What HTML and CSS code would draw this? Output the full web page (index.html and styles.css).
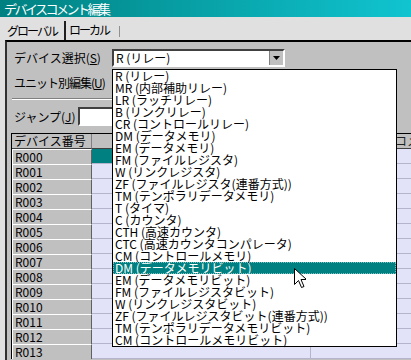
FILE: index.html
```html
<!doctype html>
<html>
<head>
  <meta charset="utf-8">
  <title>デバイスコメント編集</title>
  <link rel="stylesheet" href="styles.css">
</head>
<body>
  <div class="titlebar">デバイスコメント編集</div>
  <div class="tabs">
    <span class="tab active">グローバル</span>
    <span class="tab">ローカル</span>
    <span class="tab-sep"></span>
  </div>
  <div class="panel">
    <div class="field">
      <span class="label">デバイス選択(<u>S</u>)</span>
      <div class="combo">
        <span class="combo-text">R (リレー)</span>
        <span class="combo-btn">
          <svg width="7" height="4" viewBox="0 0 7 4"><path d="M0 0h7L3.5 4z" fill="#000"/></svg>
        </span>
      </div>
    </div>
    <div class="field">
      <span class="label tight">ユニット別編集(<u>U</u>)</span>
    </div>
    <div class="sep"></div>
    <div class="field jump">
      <span class="label">ジャンプ(<u>J</u>)</span>
      <div class="input"></div>
    </div>
    <div class="grid">
      <div class="head first">デバイス番号</div>
      <div class="head"></div>
      <div class="head comment">コメント</div>

      <div class="rowhead">R000</div><div class="cell selected"></div><div class="cell"></div>
      <div class="rowhead">R001</div><div class="cell"></div><div class="cell"></div>
      <div class="rowhead">R002</div><div class="cell"></div><div class="cell"></div>
      <div class="rowhead">R003</div><div class="cell"></div><div class="cell"></div>
      <div class="rowhead">R004</div><div class="cell"></div><div class="cell"></div>
      <div class="rowhead">R005</div><div class="cell"></div><div class="cell"></div>
      <div class="rowhead">R006</div><div class="cell"></div><div class="cell"></div>
      <div class="rowhead">R007</div><div class="cell"></div><div class="cell"></div>
      <div class="rowhead">R008</div><div class="cell"></div><div class="cell"></div>
      <div class="rowhead">R009</div><div class="cell"></div><div class="cell"></div>
      <div class="rowhead">R010</div><div class="cell"></div><div class="cell"></div>
      <div class="rowhead">R011</div><div class="cell"></div><div class="cell"></div>
      <div class="rowhead">R012</div><div class="cell"></div><div class="cell"></div>
      <div class="rowhead">R013</div><div class="cell"></div><div class="cell"></div>
    </div>
  </div>

  <ul class="dropdown">
    <li>R (リレー)</li>
    <li>MR (内部補助リレー)</li>
    <li>LR (ラッチリレー)</li>
    <li>B (リンクリレー)</li>
    <li>CR (コントロールリレー)</li>
    <li>DM (データメモリ)</li>
    <li>EM (データメモリ)</li>
    <li>FM (ファイルレジスタ)</li>
    <li>W (リンクレジスタ)</li>
    <li>ZF (ファイルレジスタ(連番方式))</li>
    <li>TM (テンポラリデータメモリ)</li>
    <li>T (タイマ)</li>
    <li>C (カウンタ)</li>
    <li>CTH (高速カウンタ)</li>
    <li>CTC (高速カウンタコンパレータ)</li>
    <li>CM (コントロールメモリ)</li>
    <li class="hot">DM (データメモリビット)</li>
    <li>EM (データメモリビット)</li>
    <li>FM (ファイルレジスタビット)</li>
    <li>W (リンクレジスタビット)</li>
    <li>ZF (ファイルレジスタビット(連番方式))</li>
    <li>TM (テンポラリデータメモリビット)</li>
    <li>CM (コントロールメモリビット)</li>
  </ul>

  <svg class="cursor" width="12" height="21" viewBox="0 0 12 21">
    <path d="M0.5 0.5v16l4-4 3 7 2.5-1-3-7h5.5z" fill="#fff" stroke="#000" stroke-width="1"/>
  </svg>
</body>
</html>
```

FILE: styles.css
```css
body {
  margin: 0;
  width: 411px;
  height: 360px;
  overflow: hidden;
  position: relative;
  background: #e0e0e0;
  font-family: "Noto Sans CJK JP", "Noto Sans", sans-serif;
  font-size: 12px;
  line-height: 1;
  color: #000;
}

.titlebar {
  height: 17px;
  padding-left: 4px;
  background: linear-gradient(to right, #008080, #10c4d0);
  color: #fff;
  font-size: 13px;
  line-height: 17px;
  letter-spacing: -2.5px;
}

.tabs {
  height: 23px;
  display: flex;
  align-items: stretch;
  padding-left: 7px;
  background: #e0e0e0;
  letter-spacing: -2px;
}

.tab {
  display: flex;
  align-items: center;
  padding-top: 2px;
}

.tab.active {
  padding-right: 7px;
  margin-right: 3px;
  border-right: 2px solid #202020;
  margin-top: 4px;
  padding-top: 0;
}

.tab-sep {
  width: 1px;
  height: 11px;
  margin: 9px 0 0 10px;
  background: #909090;
}

.panel {
  margin-left: 5px;
  height: 320px;
  border-top: 2px solid #000;
  border-left: 2px solid #303030;
  background: #c0c0c0;
  padding-top: 7px;
}

.field {
  display: flex;
  align-items: center;
  height: 18px;
  padding-left: 7px;
  margin-bottom: 7px;
}

.label {
  width: 98px;
  white-space: nowrap;
}

.label.tight {
  letter-spacing: -1px;
}

.combo {
  display: flex;
  align-items: center;
  width: 169px;
  height: 14px;
  background: #fff;
  border: 2px solid;
  border-color: #404040 #fff #fff #404040;
}

.combo-text {
  flex: 1;
  padding-left: 2px;
}

.combo-btn {
  width: 13px;
  height: 14px;
  display: flex;
  align-items: center;
  justify-content: center;
  background: #c0c0c0;
  border-left: 1px solid #808080;
}

.sep {
  margin: -1px 0 0 5px;
  height: 1px;
  width: 110px;
  background: #808080;
  border-bottom: 1px solid #fff;
}

.jump {
  margin-top: 7px;
  height: 19px;
}

.jump .label {
  width: 64px;
}

.input {
  width: 100px;
  height: 15px;
  background: #fff;
  border: 2px solid;
  border-color: #404040 #fff #fff #404040;
}

.grid {
  margin: 6px 0 0 4px;
  display: grid;
  grid-template-columns: 80px 219px 200px;
  grid-auto-rows: 15px;
  border-top: 1px solid #000;
  border-left: 1px solid #000;
}

.head {
  background: #c0c0c0;
  border-right: 1px solid #808080;
  border-bottom: 1px solid #404040;
  display: flex;
  align-items: center;
  padding-left: 2px;
}

.head.comment {
  padding-left: 84px;
  color: #202020;
}

.rowhead {
  background: #c0c0c0;
  border-top: 1px solid #fff;
  border-left: 1px solid #fff;
  border-right: 1px solid #606060;
  display: flex;
  align-items: center;
  padding-left: 2px;
}

.cell {
  background: #e2e2f8;
  border-bottom: 1px solid #b4b4cc;
  border-right: 1px solid #b4b4cc;
}

.cell.selected {
  background: #008080;
}

.dropdown {
  position: absolute;
  left: 112px;
  top: 69px;
  width: 283px;
  margin: 0;
  padding: 0;
  list-style: none;
  background: #fff;
  border: 1px solid #000;
}

.dropdown li {
  height: 12px;
  line-height: 12px;
  padding-left: 2px;
  white-space: nowrap;
}

.dropdown li.hot {
  background: #008080;
  color: #fff;
  outline: 1px dotted #80c0c0;
  outline-offset: -1px;
}

.cursor {
  position: absolute;
  left: 294px;
  top: 268px;
}
```
